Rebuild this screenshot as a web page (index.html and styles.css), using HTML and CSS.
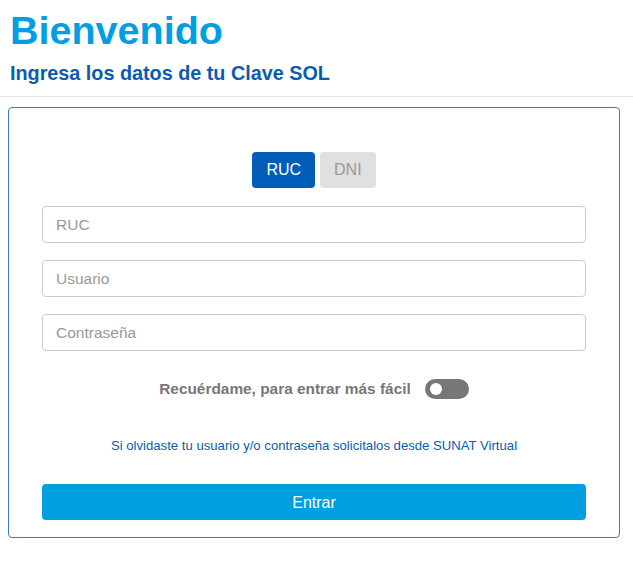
FILE: index.html
```html
<!DOCTYPE html>
<html lang="es">
<head>
<meta charset="utf-8">
<title>Clave SOL</title>
<link rel="stylesheet" href="styles.css">
</head>
<body>
<header class="header">
  <h1 class="title">Bienvenido</h1>
  <h2 class="subtitle">Ingresa los datos de tu Clave SOL</h2>
</header>
<main class="card">
  <div class="tabs">
    <button class="tab tab-active" type="button">RUC</button>
    <button class="tab tab-inactive" type="button">DNI</button>
  </div>
  <div class="fields">
    <input class="field" type="text" placeholder="RUC">
    <input class="field" type="text" placeholder="Usuario">
    <input class="field" type="password" placeholder="Contraseña">
  </div>
  <div class="remember">
    <span class="remember-label">Recuérdame, para entrar más fácil</span>
    <span class="switch"><span class="knob"></span></span>
  </div>
  <p class="help"><a class="help-link" href="#">Si olvidaste tu usuario y/o contraseña solicitalos desde SUNAT Virtual</a></p>
  <button class="submit" type="button">Entrar</button>
</main>
</body>
</html>
```
FILE: styles.css
```css
* { box-sizing: border-box; }
html, body { margin: 0; padding: 0; background: #fff; }
body {
  font-family: Arial, "Liberation Sans", sans-serif;
  color: #333;
}
.header {
  padding: 7px 10px 0;
  border-bottom: 1px solid #e5e5e5;
  height: 97px;
}
.title {
  margin: 0;
  font-size: 39.5px;
  line-height: 46px;
  font-weight: bold;
  color: #009ee3;
}
.subtitle {
  margin: 9px 0 0;
  font-size: 19.8px;
  line-height: 23px;
  font-weight: bold;
  color: #0b5cb0;
}
.card {
  margin: 10px 13px 0 8px;
  border: 1px solid #3a7bbf;
  border-radius: 4px;
  padding: 44px 33px 17px 33px;
}
.tabs {
  display: flex;
  justify-content: center;
  gap: 5px;
}
.tab {
  height: 36px;
  border: 0;
  border-radius: 4px;
  padding: 0 14px;
  font-family: Arial, "Liberation Sans", sans-serif;
  font-size: 16px;
}
.tab-active { background: #005eb8; color: #fff; }
.tab-inactive { background: #e0e0e0; color: #999; }
.fields {
  margin-top: 18px;
  display: flex;
  flex-direction: column;
  gap: 17px;
}
.field {
  height: 37px;
  width: 100%;
  border: 1px solid #ccc;
  border-radius: 4px;
  padding: 0 13px;
  font-family: Arial, "Liberation Sans", sans-serif;
  font-size: 15.5px;
  color: #333;
  background: #fff;
}
.field::placeholder { color: #999; }
.remember {
  margin-top: 28px;
  height: 20px;
  display: flex;
  justify-content: center;
  align-items: center;
  gap: 14px;
}
.remember-label {
  font-size: 15.4px;
  font-weight: bold;
  color: #777;
}
.switch {
  width: 44px;
  height: 20px;
  border-radius: 10px;
  background: #777;
  display: flex;
  align-items: center;
  padding-left: 5px;
}
.knob {
  width: 12px;
  height: 12px;
  border-radius: 50%;
  background: #fff;
}
.help {
  margin: 39px 0 0;
  text-align: center;
  font-size: 13.15px;
  line-height: 16px;
}
.help-link { color: #0b5cb0; text-decoration: none; }
.submit {
  display: block;
  width: 100%;
  margin-top: 30px;
  height: 36px;
  border: 0;
  border-radius: 4px;
  padding: 2px 0 0;
  background: #00a0e0;
  color: #fff;
  font-family: Arial, "Liberation Sans", sans-serif;
  font-size: 16px;
}
```
